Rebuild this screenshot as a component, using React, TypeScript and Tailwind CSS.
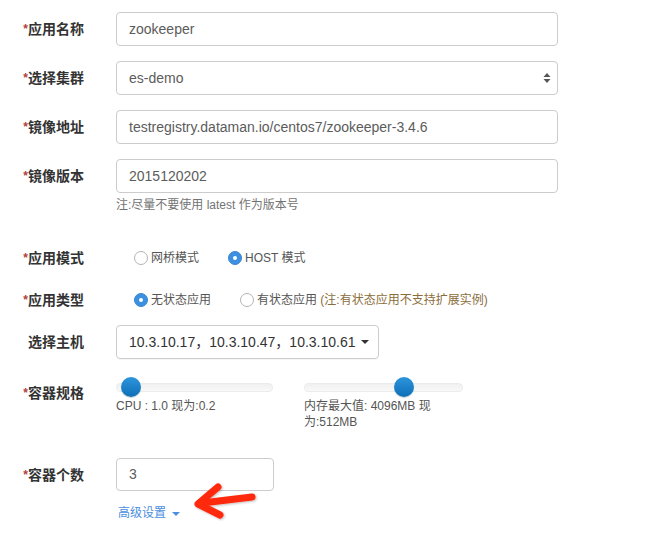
import React from "react";

const FONT = { fontFamily: '"Liberation Sans", "Noto Sans CJK SC", sans-serif' };

function Label({ text, required = true }: { text: string; required?: boolean }) {
  return (
    <div className="w-[84px] shrink-0 text-right text-[14px] font-bold leading-[20px] text-[#333]">
      {required && <span className="text-[#b0403d] text-[12px] align-top">*</span>}
      {text}
    </div>
  );
}

function Radio({ checked, label }: { checked: boolean; label: React.ReactNode }) {
  return (
    <div className="flex items-center mr-[29px]">
      {checked ? (
        <span className="w-[14px] h-[14px] rounded-full bg-[#3d8fe0] flex items-center justify-center border border-[#3a86d4]">
          <span className="w-[4px] h-[4px] rounded-full bg-white" />
        </span>
      ) : (
        <span className="w-[14px] h-[14px] rounded-full bg-white border border-[#b5b5b5]" />
      )}
      <span className="ml-[3px] text-[12px] text-[#555]">{label}</span>
    </div>
  );
}

function Slider({ pos, width, text }: { pos: number; width: number; text: string }) {
  return (
    <div style={{ width }} className="shrink-0">
      <div className="relative h-[20px] flex items-center">
        <div className="w-full h-[9px] rounded-[4px] bg-gradient-to-b from-[#f0f0f0] to-[#f9f9f9] border border-[#ececec]" />
        <div
          className="absolute top-0 w-[20px] h-[20px] rounded-full bg-gradient-to-b from-[#2d95dc] to-[#0b6fb8] shadow-[0_1px_1px_rgba(0,0,0,0.2)]"
          style={{ left: pos - 10 }}
        />
      </div>
      <div className="mt-[1px] text-[12px] leading-[16px] text-[#555]">{text}</div>
    </div>
  );
}

export default function App() {
  return (
    <div style={FONT} className="relative w-[656px] h-[535px] bg-white pt-[12px]">
      {/* 应用名称 */}
      <div className="flex items-center h-[34px]">
        <Label text="应用名称" />
        <div className="ml-[32px] w-[442px] h-[34px] border border-[#ccc] rounded-[4px] px-[12px] flex items-center text-[14px] text-[#5c5c5c]">
          zookeeper
        </div>
      </div>
      {/* 选择集群 */}
      <div className="flex items-center h-[34px] mt-[15px]">
        <Label text="选择集群" />
        <div className="ml-[32px] w-[442px] h-[34px] border border-[#ccc] rounded-[4px] pl-[12px] pr-[6px] flex items-center justify-between text-[14px] text-[#5c5c5c]">
          <span>es-demo</span>
          <svg width="8" height="12" viewBox="0 0 8 12">
            <path d="M4 1 L7.5 5 L0.5 5 Z" fill="#555" />
            <path d="M4 11 L7.5 7 L0.5 7 Z" fill="#555" />
          </svg>
        </div>
      </div>
      {/* 镜像地址 */}
      <div className="flex items-center h-[34px] mt-[15px]">
        <Label text="镜像地址" />
        <div className="ml-[32px] w-[442px] h-[34px] border border-[#ccc] rounded-[4px] px-[12px] flex items-center text-[14px] text-[#5c5c5c]">
          testregistry.dataman.io/centos7/zookeeper-3.4.6
        </div>
      </div>
      {/* 镜像版本 */}
      <div className="flex items-center h-[34px] mt-[15px]">
        <Label text="镜像版本" />
        <div className="ml-[32px] w-[442px] h-[34px] border border-[#ccc] rounded-[4px] px-[12px] flex items-center text-[14px] text-[#5c5c5c]">
          2015120202
        </div>
      </div>
      <div className="ml-[116px] mt-[4px] text-[12px] leading-[17px] text-[#737373]">
        注:尽量不要使用 latest 作为版本号
      </div>
      {/* 应用模式 */}
      <div className="flex items-center h-[34px] mt-[27px]">
        <Label text="应用模式" />
        <div className="ml-[50px] flex items-center">
          <Radio checked={false} label="网桥模式" />
          <Radio checked={true} label="HOST 模式" />
        </div>
      </div>
      {/* 应用类型 */}
      <div className="flex items-center h-[34px] mt-[8px]">
        <Label text="应用类型" />
        <div className="ml-[50px] flex items-center">
          <Radio checked={true} label="无状态应用" />
          <Radio
            checked={false}
            label={
              <>
                有状态应用 <span className="text-[#8a6d3b]">(注:有状态应用不支持扩展实例)</span>
              </>
            }
          />
        </div>
      </div>
      {/* 选择主机 */}
      <div className="flex items-center h-[34px] mt-[8px]">
        <Label text="选择主机" required={false} />
        <div className="ml-[32px] w-[263px] h-[34px] border border-[#ccc] rounded-[4px] pl-[12px] pr-[9px] flex items-center justify-between text-[14px] text-[#333] shadow-[0_1px_1px_rgba(0,0,0,0.04)]">
          <span>10.3.10.17，10.3.10.47，10.3.10.61</span>
          <svg width="8" height="4" viewBox="0 0 8 4">
            <path d="M0 0 L8 0 L4 4 Z" fill="#333" />
          </svg>
        </div>
      </div>
      {/* 容器规格 */}
      <div className="flex items-start mt-[18px]">
        <div className="mt-[6px]">
          <Label text="容器规格" />
        </div>
        <div className="ml-[32px] flex items-start gap-[31px]">
          <Slider pos={15} width={157} text="CPU : 1.0 现为:0.2" />
          <Slider pos={100} width={159} text="内存最大值: 4096MB 现为:512MB" />
        </div>
      </div>
      {/* 容器个数 */}
      <div className="flex items-center h-[33px] mt-[28px]">
        <Label text="容器个数" />
        <div className="ml-[32px] w-[158px] h-[33px] border border-[#ccc] rounded-[4px] px-[12px] flex items-center text-[14px] text-[#5c5c5c]">
          3
        </div>
      </div>
      <div className="ml-[118px] mt-[14px] flex items-center text-[12px] leading-[17px] text-[#4a8ee0]">
        <span>高级设置</span>
        <svg className="ml-[6px]" width="8" height="4" viewBox="0 0 8 4">
          <path d="M0 0 L8 0 L4 4 Z" fill="#4a8ee0" />
        </svg>
      </div>
      {/* red arrow annotation */}
      <svg className="absolute left-0 top-0 pointer-events-none" width="656" height="535" viewBox="0 0 656 535">
        <defs>
          <filter id="sh" x="-20%" y="-20%" width="140%" height="140%">
            <feDropShadow dx="1" dy="1" stdDeviation="1" floodColor="#000" floodOpacity="0.25" />
          </filter>
        </defs>
        <g filter="url(#sh)" stroke="#ff2a0a" strokeWidth="7" strokeLinecap="round" strokeLinejoin="round" fill="none">
          <path d="M252 497 L202 503" />
          <path d="M218 487 L198 504 L220 515" />
        </g>
      </svg>
    </div>
  );
}
